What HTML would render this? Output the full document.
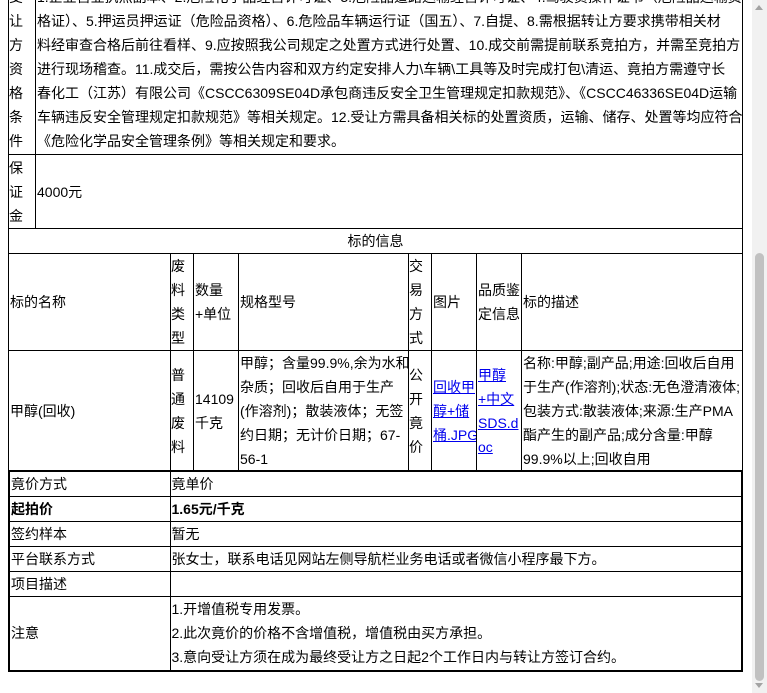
<!DOCTYPE html>
<html><head><meta charset="utf-8"><style>
html,body{margin:0;padding:0;background:#fff;overflow:hidden;width:767px;height:693px}
body{font-family:"Liberation Sans","Noto Sans CJK SC",sans-serif;font-size:14px;color:#000;position:relative}
table{border-collapse:collapse;table-layout:fixed;position:absolute;left:8px;width:735px}
td{border:1px solid #000;padding:0 1px;line-height:24px;vertical-align:middle;overflow-wrap:anywhere;overflow:hidden}
.nw{white-space:nowrap;overflow-wrap:normal}
a{color:#00e;text-decoration:underline}
.sb{position:absolute;right:0;top:0;width:15px;height:693px;background:#f1f1f1}
.th{position:absolute;left:3px;width:9px;top:253px;height:428px;background:#c1c1c1;border-radius:5px}
.ar{position:absolute;left:3px;width:0;height:0;border-left:4.5px solid transparent;border-right:4.5px solid transparent}
</style></head><body>
<table style="top:-17px">
<colgroup><col style="width:27px"><col></colgroup>
<tr style="height:171px"><td style="padding:0">受<br>让<br>方<br>资<br>格<br>条<br>件</td><td class="nw">1.企业营业执照副本、2.危险化学品经营许可证、3.危险品道路运输经营许可证、4.驾驶员操作证书（危险品运输资<br>格证）、5.押运员押运证（危险品资格）、6.危险品车辆运行证（国五）、7.自提、8.需根据转让方要求携带相关材<br>料经审查合格后前往看样、9.应按照我公司规定之处置方式进行处置、10.成交前需提前联系竞拍方，并需至竞拍方<br>进行现场稽查。11.成交后，需按公告内容和双方约定安排人力\车辆\工具等及时完成打包\清运、竟拍方需遵守长<br>春化工（江苏）有限公司《CSCC6309SE04D承包商违反安全卫生管理规定扣款规范》、《CSCC46336SE04D运输<br>车辆违反安全管理规定扣款规范》等相关规定。12.受让方需具备相关标的处置资质，运输、储存、处置等均应符合<br>《危险化学品安全管理条例》等相关规定和要求。</td></tr>
<tr style="height:74px"><td style="padding:0">保<br>证<br>金</td><td>4000元</td></tr>
</table>
<table style="top:228px">
<colgroup><col style="width:162px"><col style="width:23px"><col style="width:45px"><col style="width:170px"><col style="width:23px"><col style="width:45px"><col style="width:45px"><col></colgroup>
<tr style="height:25px"><td colspan="8" style="text-align:center">标的信息</td></tr>
<tr style="height:97px"><td>标的名称</td><td style="padding:0">废<br>料<br>类<br>型</td><td>数量<br>+单位</td><td>规格型号</td><td style="padding:0">交<br>易<br>方<br>式</td><td>图片</td><td>品质鉴定信息</td><td>标的描述</td></tr>
<tr style="height:120px"><td>甲醇(回收)</td><td style="padding:0">普<br>通<br>废<br>料</td><td>14109千克</td><td class="nw" style="padding:0 0 0 1px">甲醇；含量99.9%,余为水和<br>杂质；回收后自用于生产<br>(作溶剂)；散装液体；无签<br>约日期；无计价日期；67-<br>56-1</td><td style="padding:0">公<br>开<br>竟<br>价</td><td class="nw"><a>回收甲<br>醇+储<br>桶.JPG</a></td><td class="nw"><a>甲醇<br>+中文<br>SDS.d<br>oc</a></td><td class="nw">名称:甲醇;副产品;用途:回收后自用<br>于生产(作溶剂);状态:无色澄清液体;<br>包装方式:散装液体;来源:生产PMA<br>酯产生的副产品;成分含量:甲醇<br>99.9%以上;回收自用</td></tr>
</table>
<table style="top:470px;border:2px solid #000">
<colgroup><col style="width:161px"><col></colgroup>
<tr style="height:25px"><td>竟价方式</td><td>竟单价</td></tr>
<tr style="height:25px"><td><b>起拍价</b></td><td><b>1.65元/千克</b></td></tr>
<tr style="height:25px"><td>签约样本</td><td>暂无</td></tr>
<tr style="height:25px"><td>平台联系方式</td><td>张女士，联系电话见网站左侧导航栏业务电话或者微信小程序最下方。</td></tr>
<tr style="height:25px"><td>项目描述</td><td></td></tr>
<tr style="height:74px"><td>注意</td><td>1.开增值税专用发票。<br>2.此次竟价的价格不含增值税，增值税由买方承担。<br>3.意向受让方须在成为最终受让方之日起2个工作日内与转让方签订合约。</td></tr>
</table>
<div class="sb"><div class="ar" style="top:5px;border-bottom:5px solid #a3a3a3"></div><div class="th"></div><div class="ar" style="top:683px;border-top:5px solid #a3a3a3"></div></div>
</body></html>
